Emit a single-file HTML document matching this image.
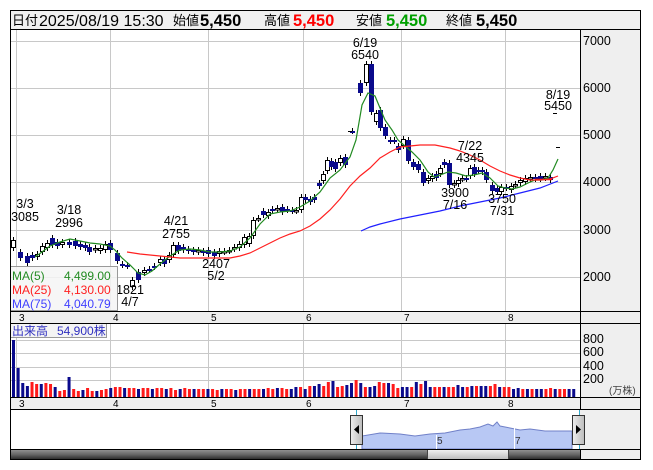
<!DOCTYPE html>
<html><head><meta charset="utf-8">
<style>
html,body{margin:0;padding:0;background:#fff;width:653px;height:470px;overflow:hidden}
svg{display:block;font-family:"Liberation Sans","Noto Sans CJK JP",sans-serif}
</style></head><body>
<svg id="s" width="653" height="470" viewBox="0 0 653 470" xmlns="http://www.w3.org/2000/svg"></svg>
<script>
var o='';
function r(x,y,w,h,f,st){o+='<rect x="'+x+'" y="'+y+'" width="'+w+'" height="'+h+'" fill="'+f+'"'+(st?' stroke="'+st+'" stroke-width="1"':'')+'/>';}
function l(x1,y1,x2,y2,c,w){o+='<line x1="'+x1+'" y1="'+y1+'" x2="'+x2+'" y2="'+y2+'" stroke="'+c+'" stroke-width="'+(w||1)+'"/>';}
function t(x,y,s,sz,c,extra){o+='<text x="'+x+'" y="'+y+'" font-size="'+sz+'" fill="'+(c||'#000')+'" '+(extra||'')+'>'+s+'</text>';}
function pl(pts,c){o+='<polyline fill="none" stroke="'+c+'" stroke-width="1.2" points="'+pts.map(function(p){return p.join(',')}).join(' ')+'"/>';}
r(10,10,631,450,'#fff');
r(10,10,631,19,'#f0f0f0');
r(580,29,61,282,'#efefef');
r(10,311,570,12,'#efefef');r(580,311,61,12,'#efefef');
r(580,323,61,74,'#efefef');
r(10,397,631,12,'#efefef');
r(580,409,61,51,'#efefef');
var vx=[16,110,208,303,401,505];
[41,88,135,182,230,277].forEach(function(y){l(10,y+.5,580,y+.5,'#c8c8c8');});
vx.forEach(function(x){l(x+.5,29,x+.5,311,'#c8c8c8');l(x+.5,323,x+.5,397,'#c8c8c8');});
[340,353,367,380].forEach(function(y){l(10,y+.5,580,y+.5,'#c8c8c8');});
var C=[[13,240,248,0],[20,252,258,1],[27,256,263,1],[32,255,258,1],[37,254,257,0],[42,246,252,0],[47,243,248,0],[52,238,245,1],[57,242,246,1],[62,242,245,0],[69,242,245,1],[75,241,246,1],[80,244,247,1],[85,245,248,1],[89,247,252,1],[95,248,250,0],[100,248,251,0],[105,244,250,0],[110,243,250,1],[117,253,261,1],[122,264,265,1],[127,265,266,1],[132,280,287,0],[138,272,280,1],[144,270,273,0],[149,269,270,1],[154,266,267,1],[160,259,263,0],[164,259,264,1],[169,255,260,0],[173,245,255,0],[178,245,251,1],[183,247,250,1],[188,249,251,1],[193,250,252,1],[198,250,252,0],[203,251,253,1],[208,250,254,1],[214,252,256,1],[219,251,254,0],[224,251,252,0],[229,250,251,0],[234,247,249,0],[239,244,248,0],[244,237,245,0],[249,236,244,0],[253,220,236,0],[258,218,219,0],[263,211,215,1],[268,212,216,0],[272,209,210,1],[277,208,209,0],[282,207,212,1],[287,209,210,1],[292,210,211,1],[296,210,211,0],[301,197,210,0],[305,197,200,1],[310,199,202,1],[314,197,200,1],[319,183,186,1],[323,174,181,0],[327,160,171,0],[331,161,167,1],[335,162,169,1],[340,158,163,0],[345,157,165,1],[352,131,131,1],[360,83,93,1],[366,64,83,0],[371,64,112,1],[376,113,122,0],[380,110,128,1],[385,127,136,1],[390,140,141,1],[394,140,141,1],[398,146,150,1],[403,139,146,0],[408,140,161,1],[413,162,167,1],[418,164,170,1],[423,172,183,1],[428,178,181,0],[432,176,179,0],[436,174,178,1],[440,168,174,0],[444,162,165,1],[449,163,185,1],[454,183,185,0],[458,180,184,0],[462,178,179,0],[466,178,179,1],[470,168,176,0],[474,167,174,1],[478,170,171,1],[482,170,172,1],[486,172,180,1],[492,185,191,1],[497,188,192,1],[501,187,192,0],[506,187,188,1],[511,186,190,0],[515,184,185,0],[520,180,183,0],[525,178,182,0],[530,177,179,0],[535,177,179,1],[540,176,179,1],[545,176,178,0],[550,177,180,1]];
C.forEach(function(c){var x=c[0];l(x+.5,c[1]-3,x+.5,c[2]+3,'#000');
 if(c[3])r(x-2,c[1],5,Math.max(2,c[2]-c[1]),'#0a0a8c');else r(x-1.5,c[1]+.5,4,Math.max(1.5,c[2]-c[1]-1),'#fff','#000');});
l(348,131.5,352,131.5,'#000');l(553,113.5,557,113.5,'#000');l(556,147.5,560,147.5,'#000');l(535,179.5,552,179.5,'#ff0000',1.5);
pl([[35,257],[42,252],[50,246],[60,242],[70,239],[80,241],[90,243],[100,244],[110,246],[115,250],[122,258],[130,265],[138,273],[145,275],[152,271],[160,264],[170,256],[180,250],[190,249],[200,250],[210,252],[220,252],[230,251],[240,247],[250,238],[260,224],[270,214],[280,212],[290,211],[300,207],[310,201],[320,192],[330,178],[340,170],[350,157],[356,140],[362,105],[368,93],[375,96],[380,108],[385,120],[392,130],[398,140],[405,146],[412,152],[420,160],[428,172],[434,177],[440,175],[448,172],[456,173],[466,176],[474,175],[482,173],[490,178],[498,186],[505,188],[512,189],[520,187],[528,183],[535,180],[542,180],[548,178],[553,170],[558,159]],'#228b22');
pl([[127,252],[140,254],[160,256],[180,258],[200,258],[230,258],[240,256],[250,253],[260,248],[270,243],[280,238],[290,234],[300,231],[310,226],[320,219],[330,210],[340,199],[350,186],[360,176],[370,168],[380,158],[390,152],[400,147],[410,146],[420,145],[435,145],[450,148],[460,151],[470,155],[480,160],[490,166],[500,171],[510,175],[520,178],[530,180],[540,180],[550,179],[558,176]],'#ff2020');
pl([[361,231],[370,227],[380,224],[400,219],[420,215],[440,211],[460,206],[480,202],[500,198],[520,193],[540,188],[558,181]],'#2020ff');
var A=[[25,208,'3/3'],[25,221,'3085'],[69,214,'3/18'],[69,227,'2996'],[176,225,'4/21'],[176,238,'2755'],[216,268,'2407'],[216,280,'5/2'],[130,294,'1821'],[130,306,'4/7'],[365,47,'6/19'],[365,59,'6540'],[470,150,'7/22'],[470,162,'4345'],[455,197,'3900'],[455,209,'7/16'],[502,203,'3750'],[502,215,'7/31'],[558,99,'8/19'],[558,110,'5450']];
A.forEach(function(a){t(a[0],a[1],a[2],12.5,'#000','text-anchor="middle"');});
r(10.5,266.5,107,44,'#f4f4f4','#999');o=o.replace(/(<rect x="10.5"[^>]*)\/>/,'$1 fill-opacity="0.85"/>');
t(12,280,'MA(5)',12,'#228b22');t(64,280,'4,499.00',12,'#228b22');
t(12,294,'MA(25)',12,'#ff2020');t(64,294,'4,130.00',12,'#ff2020');
t(12,308,'MA(75)',12,'#4040ff');t(64,308,'4,040.79',12,'#4040ff');
[[7000,45],[6000,92],[5000,139],[4000,186],[3000,234],[2000,281]].forEach(function(p){t(583,p[1],p[0],12.5,'#000');});
var ml=['3','4','5','6','7','8'];
vx.forEach(function(x,i){t(x+3,321,ml[i],10,'#000');t(x+3,407,ml[i],10,'#000');});
var vh=[57,29,14,11,15,13,13,14,13,10,6,7,20,8,6,7,9,6,6,7,8,9,10,10,9,9,9,8,9,9,8,9,9,8,9,7,8,9,8,8,8,8,8,8,7,8,8,8,7,8,8,8,8,8,8,9,8,9,9,8,8,10,10,8,11,11,13,11,15,16,10,11,12,14,17,14,10,10,11,15,14,14,13,9,10,10,10,15,13,16,10,10,10,10,10,10,12,10,10,11,11,11,11,11,13,10,10,10,8,9,8,8,8,8,8,8,9,8,8,8,8,8];
vh.forEach(function(h,i){var x=12+i*4.63;var b=(i<3||i==12||i%3==0||(i>60&&i%4==1));r(x,397-h,3,h,b?'#0a0a8c':'#ff1a1a');});
r(10.5,323.5,96,14,'#f4f4f4','#999');
t(12,335,'出来高',12,'#3030c0');t(57,335,'54,900株',12,'#3030c0');
[[800,343],[600,356],[400,370],[200,383]].forEach(function(p){t(583,p[1],p[0],12.5,'#000');});
t(609,394,'(万株)',10,'#444');
var pts=[[362,436],[380,433],[400,434],[415,436],[430,434],[445,433],[460,430],[470,429],[480,427],[488,424],[493,426],[497,422],[500,426],[510,428],[520,430],[530,429],[545,431],[560,431],[572,431]];
o+='<path d="M362,449 '+pts.map(function(p){return 'L'+p[0]+','+p[1]}).join(' ')+' L572,449 Z" fill="#b8c8f4" stroke="#7080c8" stroke-width="1"/>';
l(436.5,435,436.5,449,'#fff');l(514.5,427,514.5,449,'#fff');
t(437,444,'5',10,'#333');t(515,444,'7',10,'#333');
l(356.5,409,356.5,449,'#33aacc');l(579.5,409,579.5,449,'#33aacc');
o+='<defs><linearGradient id="g" x1="0" y1="0" x2="1" y2="0"><stop offset="0" stop-color="#eee"/><stop offset="1" stop-color="#bbb"/></linearGradient><linearGradient id="sb" x1="0" y1="0" x2="0" y2="1"><stop offset="0" stop-color="#999"/><stop offset="0.5" stop-color="#666"/><stop offset="1" stop-color="#222"/></linearGradient><linearGradient id="th" x1="0" y1="0" x2="0" y2="1"><stop offset="0" stop-color="#f4f4f4"/><stop offset="1" stop-color="#bbb"/></linearGradient></defs>';
r(350.5,415.5,12,29,'url(#g)','#333');o+='<path d="M359,425 L359,434 L354,429.5 Z" fill="#000"/>';
r(572.5,415.5,12,29,'url(#g)','#333');o+='<path d="M576,425 L576,434 L581,429.5 Z" fill="#000"/>';
r(10,449,570,11,'url(#sb)');r(427.5,449.5,81,10,'url(#th)','#444');
o+='<rect x="10.5" y="10.5" width="630" height="449" fill="none" stroke="#000"/>';
l(10,29.5,641,29.5,'#000');l(580.5,29,580.5,409,'#000');
[311,323,397,409,449].forEach(function(y){l(10,y+.5,641,y+.5,'#000');});
l(580.5,449,580.5,460,'#000');
t(12,25,'日付',13,'#000');t(39,26,'2025/08/19 15:30',16,'#000');
t(173,25,'始値',13);t(200,26,'5,450',16.5,'#000','font-weight="bold"');
t(264,25,'高値',13);t(293,26,'5,450',16.5,'#ff0000','font-weight="bold"');
t(356,25,'安値',13);t(386,26,'5,450',16.5,'#00a000','font-weight="bold"');
t(446,25,'終値',13);t(476,26,'5,450',16.5,'#000','font-weight="bold"');
document.getElementById('s').innerHTML=o;
</script>
</body></html>
